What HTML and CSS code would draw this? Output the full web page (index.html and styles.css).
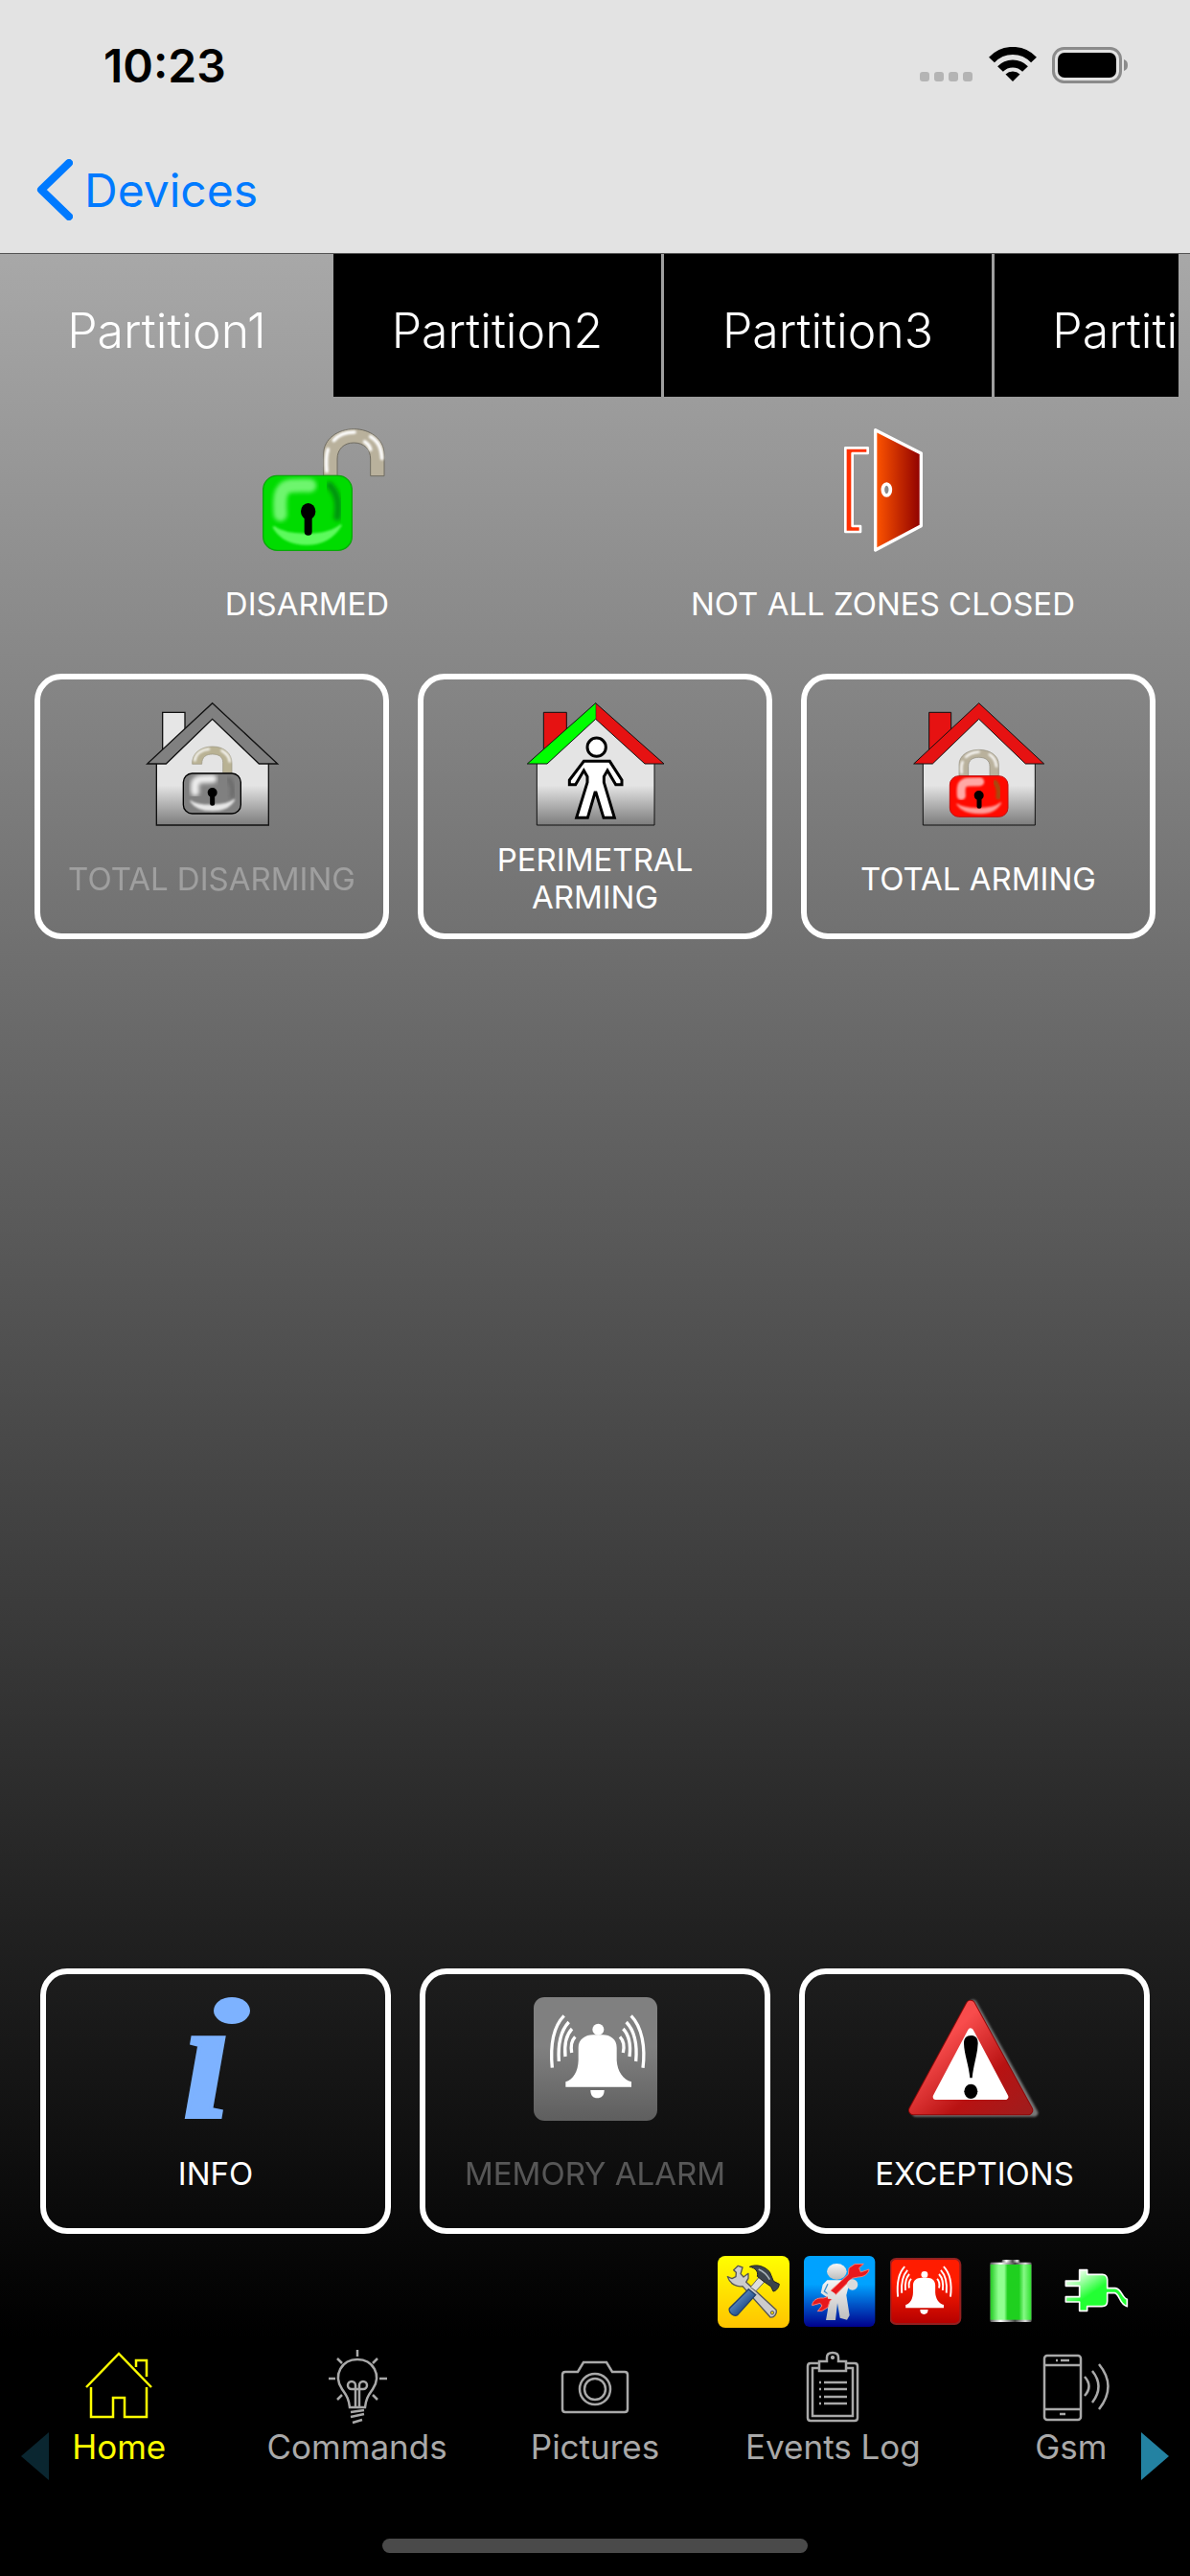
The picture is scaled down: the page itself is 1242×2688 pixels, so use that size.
FILE: index.html
```html
<!DOCTYPE html>
<html lang="en">
<head>
    <meta charset="UTF-8">
    <meta name="viewport" content="width=device-width, initial-scale=1.0">
    <title>Partition1</title>
    <link rel="stylesheet" href="styles.css">
</head>
<body>
    <!-- shared shapes -->
    <svg class="defs" width="0" height="0" aria-hidden="true">
        <defs>
            <linearGradient id="wall" x1="0" y1="0" x2="0" y2="1">
                <stop offset="0" stop-color="#e4e4e4"/>
                <stop offset="0.64" stop-color="#e4e4e4"/>
                <stop offset="1" stop-color="#7c7c7c"/>
            </linearGradient>
            <linearGradient id="door" x1="0" y1="0" x2="1" y2="0">
                <stop offset="0" stop-color="#ff5500"/>
                <stop offset="1" stop-color="#8e0000"/>
            </linearGradient>
            <linearGradient id="grayBox" x1="0" y1="0" x2="0" y2="1">
                <stop offset="0.4" stop-color="#808080"/>
                <stop offset="1" stop-color="#5e5e5e"/>
            </linearGradient>
            <linearGradient id="redBox" x1="0" y1="0" x2="0" y2="1">
                <stop offset="0.35" stop-color="#ff1c00"/>
                <stop offset="1" stop-color="#b40000"/>
            </linearGradient>
            <linearGradient id="yellowBox" x1="0" y1="0" x2="0" y2="1">
                <stop offset="0" stop-color="#ffff00"/>
                <stop offset="1" stop-color="#ffc400"/>
            </linearGradient>
            <linearGradient id="blueBox" x1="0" y1="0" x2="0" y2="1">
                <stop offset="0.4" stop-color="#00a2ff"/>
                <stop offset="1" stop-color="#00008c"/>
            </linearGradient>
            <linearGradient id="cell" x1="0" y1="0" x2="1" y2="0">
                <stop offset="0" stop-color="#22c822"/>
                <stop offset="0.2" stop-color="#90ff90"/>
                <stop offset="0.34" stop-color="#90ff90"/>
                <stop offset="0.42" stop-color="#1fd01f"/>
                <stop offset="0.7" stop-color="#1fd01f"/>
                <stop offset="0.82" stop-color="#86f986"/>
                <stop offset="1" stop-color="#2fe02f"/>
            </linearGradient>
            <linearGradient id="metal" x1="0" y1="0" x2="1" y2="0">
                <stop offset="0" stop-color="#555"/>
                <stop offset="0.25" stop-color="#fff"/>
                <stop offset="0.6" stop-color="#444"/>
                <stop offset="0.85" stop-color="#ddd"/>
                <stop offset="1" stop-color="#555"/>
            </linearGradient>
            <linearGradient id="plugFill" x1="0" y1="0" x2="1" y2="1">
                <stop offset="0.15" stop-color="#dfffdf"/>
                <stop offset="0.5" stop-color="#22ff33"/>
            </linearGradient>
            <linearGradient id="warn" x1="0" y1="0" x2="1" y2="1">
                <stop offset="0.3" stop-color="#f84c4c"/>
                <stop offset="0.68" stop-color="#b81212"/>
                <stop offset="1" stop-color="#a01c1c"/>
            </linearGradient>
            <linearGradient id="figure" x1="0" y1="0" x2="0" y2="1">
                <stop offset="0" stop-color="#f6f6f6"/>
                <stop offset="1" stop-color="#bdbdbd"/>
            </linearGradient>
            <linearGradient id="handle" x1="0" y1="0" x2="1" y2="1">
                <stop offset="0.2" stop-color="#6d9bd1"/>
                <stop offset="0.7" stop-color="#1d4a86"/>
            </linearGradient>
            <filter id="soft" x="-30%" y="-30%" width="160%" height="160%">
                <feGaussianBlur stdDeviation="6"/>
            </filter>
            <filter id="glow" x="-30%" y="-30%" width="160%" height="160%">
                <feGaussianBlur stdDeviation="3"/>
            </filter>

            <!-- bell with sound waves -->
            <g id="bell">
                <circle cx="610" cy="233" r="18" fill="#fff"/>
                <path d="M508 413V397C532 390 547 364 548 330V290C548 264 570 250 594 250H624C648 250 668 264 668 290V330C670 364 688 390 714 397V413Z" fill="#fff"/>
                <path d="M586 423H629C629 440 620 448 607 448S586 440 586 423Z" fill="#fff"/>
                <g fill="none" stroke="#fff" stroke-width="10">
                    <path d="M503 190C468 226 460 290 466 353"/>
                    <path d="M518 210C488 242 484 290 487 333"/>
                    <path d="M528 231C506 254 504 286 507 318"/>
                    <path d="M538 256C524 270 524 288 527 306"/>
                    <path d="M713 190C748 226 758 290 750 353"/>
                    <path d="M698 210C728 242 732 290 728 333"/>
                    <path d="M688 231C710 254 712 286 708 318"/>
                    <path d="M678 256C692 270 692 288 688 306"/>
                </g>
            </g>
        </defs>
    </svg>

    <header class="header">
        <div class="status-bar">
            <span class="clock">10:23</span>
            <svg class="status-icons" viewBox="0 0 218 38" aria-hidden="true">
                <g fill="#b4b4b4">
                    <rect x="0" y="26" width="10" height="10" rx="3"/>
                    <rect x="15" y="26" width="10" height="10" rx="3"/>
                    <rect x="30" y="26" width="10" height="10" rx="3"/>
                    <rect x="45" y="26" width="10" height="10" rx="3"/>
                </g>
                <g fill="none" stroke="#000" stroke-width="8">
                    <path d="M75 13.500A30 30 0 0 1 119 13.500"/>
                    <path d="M84 23A18 18 0 0 1 110 23"/>
                </g>
                <path d="M97 36L89.500 28.500A11 11 0 0 1 104.500 28.500Z"/>
                <rect x="139.500" y="1.500" width="70" height="35" rx="11" fill="none" stroke="#8b8b8b" stroke-width="3"/>
                <rect x="144" y="6" width="61" height="26" rx="7"/>
                <path d="M213 13C216 14 217 16 217 19S216 24 213 25Z" fill="#8b8b8b"/>
            </svg>
        </div>
        <a class="back" href="#">
            <svg class="back-icon" viewBox="0 0 38 64" aria-hidden="true">
                <path d="M34 4L5 32L34 60" fill="none" stroke="#007aff" stroke-width="8" stroke-linecap="round" stroke-linejoin="round"/>
            </svg>
            Devices
        </a>
    </header>

    <nav class="partitions">
        <button class="partition active">Partition1</button>
        <button class="partition">Partition2</button>
        <button class="partition">Partition3</button>
        <button class="partition">Partition4</button>
    </nav>

    <main class="content">
        <section class="state">
            <div class="state-item">
                <svg class="icon icon-lock" viewBox="63 84 480 387" aria-hidden="true">
                    <path d="M353 232V165C353 115 400 86 448 86S543 115 543 165V233H500V180C500 150 480 129 448 129S396 150 396 180V232Z" fill="#b9b19c" stroke="#6f6b60" stroke-width="3"/>
                    <g fill="none" stroke="#fff" stroke-width="11" stroke-linecap="round" filter="url(#glow)">
                        <path d="M363 218C360 185 362 165 367 150"/>
                        <path d="M385 122C400 103 420 96 450 96"/>
                        <path d="M500 110C525 125 534 145 536 178"/>
                        <path d="M482 126C492 133 498 140 500 150"/>
                    </g>
                    <rect x="164" y="232" width="278" height="234" rx="44" fill="#00dc00" stroke="#0aa80a" stroke-width="4"/>
                    <path d="M218 354C214 300 216 268 250 264C275 262 300 262 310 263" fill="none" stroke="#6ef56e" stroke-width="42" stroke-linecap="round" filter="url(#soft)"/>
                    <path d="M372 262C398 290 402 320 396 362" fill="none" stroke="#00930a" stroke-width="22" stroke-linecap="round" filter="url(#soft)"/>
                    <path d="M196 392C240 425 365 425 408 386C385 425 350 446 300 446S215 425 196 392Z" fill="#5dfa5d" stroke="#5dfa5d" stroke-width="6" filter="url(#glow)"/>
                    <ellipse cx="305" cy="344" rx="23" ry="26"/>
                    <path d="M305 350V407" stroke="#000" stroke-width="24" stroke-linecap="round"/>
                </svg>
                <p class="label">DISARMED</p>
            </div>
            <div class="state-item">
                <svg class="icon icon-door" viewBox="538 82 252 387" aria-hidden="true">
                    <path d="M545 143H615V160H567V388H592V406H545Z" fill="#ff2f00" stroke="#fff" stroke-width="8" stroke-linejoin="round"/>
                    <path d="M639 87L782 160V387L639 463Z" fill="url(#door)" stroke="#fff" stroke-width="10" stroke-linejoin="round"/>
                    <ellipse cx="674" cy="274" rx="12" ry="18" fill="#8a8a8a" stroke="#fff" stroke-width="11"/>
                </svg>
                <p class="label">NOT ALL ZONES CLOSED</p>
            </div>
        </section>

        <section class="cards">
            <button class="card" disabled>
                <svg class="icon icon-house" viewBox="385 130 435 387" aria-hidden="true">
                    <g stroke="#111" stroke-width="4">
                        <path d="M447 290V161H517V240Z" fill="#e6e6e6"/>
                        <path d="M428 514V310L603 170L779 310V514Z" fill="url(#wall)"/>
                        <path d="M603 132L807 322H749L603 182L458 322H399Z" fill="#808080"/>
                    </g>
                    <path d="M540 323C538 290 565 268 603 268S664 290 664 320V350H636V318C636 300 622 292 603 292S570 300 570 323Z" fill="#b9b294" stroke="#999480" stroke-width="2"/>
                    <g fill="none" stroke="#fff" stroke-width="7" stroke-linecap="round" filter="url(#glow)">
                        <path d="M548 312C550 290 570 278 592 276"/>
                        <path d="M632 281C648 290 656 300 657 315"/>
                    </g>
                    <rect x="512" y="352" width="180" height="126" rx="28" fill="#808080" stroke="#000" stroke-width="4"/>
                    <path d="M549 410C545 376 552 372 570 370L604 369" fill="none" stroke="#eee" stroke-width="26" stroke-linecap="round" filter="url(#soft)"/>
                    <path d="M654 370C668 390 668 405 665 425" fill="none" stroke="#666" stroke-width="12" stroke-linecap="round" filter="url(#soft)"/>
                    <path d="M534 438C560 457 645 457 672 434C655 462 632 468 603 468S548 460 534 438Z" fill="#e6e6e6" stroke="#e6e6e6" stroke-width="4" filter="url(#glow)"/>
                    <circle cx="603" cy="412" r="15"/>
                    <path d="M603 412V446" stroke="#000" stroke-width="15" stroke-linecap="round"/>
                </svg>
                <span class="label">TOTAL DISARMING</span>
            </button>
            <button class="card">
                <svg class="icon icon-house" viewBox="385 130 435 387" aria-hidden="true">
                    <g stroke="#111" stroke-width="3">
                        <path d="M440 290V161H512V240Z" fill="#e61212"/>
                        <path d="M419 514V310L603 170L787 310V514Z" fill="url(#wall)"/>
                        <path d="M603 132L817 322H757L603 182Z" fill="#e61212"/>
                        <path d="M603 182L451 322H389L603 132" fill="#00ff00"/>
                    </g>
                    <g fill="#fff" stroke="#000" stroke-width="9">
                        <circle cx="606" cy="270" r="29"/>
                        <path d="M566 314H647L685 373V387H666L640 343L629 362V380L662 491H628L604 412H601L578 491H543L577 380V362L566 343L540 387H521V373Z"/>
                    </g>
                </svg>
                <span class="label">PERIMETRAL ARMING</span>
            </button>
            <button class="card">
                <svg class="icon icon-house" viewBox="385 130 435 387" aria-hidden="true">
                    <g stroke="#111" stroke-width="3">
                        <path d="M447 290V161H516V240Z" fill="#e61212"/>
                        <path d="M428 514V310L603 170L779 310V514Z" fill="url(#wall)"/>
                        <path d="M603 132L807 322H749L603 182L458 322H399Z" fill="#e61212"/>
                    </g>
                    <path d="M541 360V325C541 295 570 278 603 278S665 295 665 325V360H637V330C637 310 622 302 603 302S570 310 570 330V360Z" fill="#b9b19c" stroke="#8d8878" stroke-width="2"/>
                    <g fill="none" stroke="#fff" stroke-width="7" stroke-linecap="round" filter="url(#glow)">
                        <path d="M549 350C547 335 548 325 552 316"/>
                        <path d="M562 301C572 290 585 286 603 285"/>
                        <path d="M636 293C650 302 656 312 658 330"/>
                    </g>
                    <rect x="512" y="360" width="182" height="128" rx="28" fill="#ff0a00" stroke="#c01010" stroke-width="3"/>
                    <path d="M548 422C545 386 552 381 570 379L606 378" fill="none" stroke="#ffa8a4" stroke-width="27" stroke-linecap="round" filter="url(#glow)"/>
                    <path d="M654 380C666 395 667 408 664 426" fill="none" stroke="#a84a0a" stroke-width="16" stroke-linecap="round" filter="url(#glow)"/>
                    <path d="M534 448C560 467 645 467 672 444C655 472 632 477 603 477S548 469 534 448Z" fill="#ff9c98" stroke="#ff9c98" stroke-width="4" filter="url(#glow)"/>
                    <circle cx="603" cy="421" r="15"/>
                    <path d="M604 421V455" stroke="#000" stroke-width="15" stroke-linecap="round"/>
                </svg>
                <span class="label">TOTAL ARMING</span>
            </button>
        </section>

        <section class="cards cards-bottom">
            <button class="card">
                <svg class="icon icon-info" viewBox="0 0 76 129" aria-hidden="true">
                    <text class="info-letter" x="4" y="125">ı</text>
                    <ellipse cx="55" cy="14" rx="19" ry="14" fill="#7db2ff"/>
                </svg>
                <span class="label">INFO</span>
            </button>
            <button class="card" disabled>
                <svg class="icon icon-bell" viewBox="408 132 387 387" aria-hidden="true">
                    <rect x="408" y="132" width="387" height="387" rx="34" fill="url(#grayBox)"/>
                    <use href="#bell"/>
                </svg>
                <span class="label">MEMORY ALARM</span>
            </button>
            <button class="card">
                <svg class="icon icon-warning" viewBox="375 130 432 387" aria-hidden="true">
                    <path d="M587 150L778 492H408Z" fill="#777" stroke="#777" stroke-width="24" stroke-linejoin="round" filter="url(#glow)"/>
                    <path d="M579 154L759 484H400Z" fill="url(#warn)" stroke="#8e0808" stroke-width="32" stroke-linejoin="round"/>
                    <path d="M579 154L759 484H400Z" fill="url(#warn)" stroke="url(#warn)" stroke-width="26" stroke-linejoin="round"/>
                    <path d="M579 236L688 442H470Z" fill="#fff" stroke="#fff" stroke-width="18" stroke-linejoin="round"/>
                    <path d="M558 274C558 258 566 250 580 250S602 258 602 274C601 310 588 340 584 383H577C573 340 559 310 558 274Z"/>
                    <ellipse cx="580" cy="425" rx="21" ry="23"/>
                </svg>
                <span class="label">EXCEPTIONS</span>
            </button>
        </section>

        <div class="indicators">
            <!-- tools -->
            <svg class="indicator" viewBox="57 42 225 225" aria-hidden="true">
                <rect x="57" y="42" width="225" height="225" rx="24" fill="url(#yellowBox)"/>
                <path d="M121 73L135 78L129 98L138 108L153 97V112L146 124L240 211C244 222 234 236 222 234L135 137C120 140 96 132 88 107L102 113L114 107L115 94L107 86Z" fill="#ccc" stroke="#555" stroke-width="4" stroke-linejoin="round"/>
                <circle cx="228" cy="220" r="5" fill="#ffe000" stroke="#555" stroke-width="3"/>
                <path d="M192 102L209 117L177 152L160 140Z" fill="#ddd" stroke="#666" stroke-width="3"/>
                <path d="M157 76C180 66 205 75 220 92L232 121L250 130C249 142 240 152 231 153L224 138L201 122L181 106C185 90 175 80 157 76Z" fill="#3b444b" stroke="#222" stroke-width="3"/>
                <path d="M185 84C200 90 212 102 220 116" fill="none" stroke="#a9b4ba" stroke-width="5"/>
                <path d="M154 146L176 164L120 226C108 234 90 220 94 206Z" fill="url(#handle)" stroke="#23406b" stroke-width="4"/>
            </svg>
            <!-- service -->
            <svg class="indicator" viewBox="327 42 225 225" aria-hidden="true">
                <rect x="327" y="42" width="223" height="222" rx="18" fill="url(#blueBox)"/>
                <g fill="url(#figure)">
                    <ellipse cx="430" cy="91" rx="31" ry="25"/>
                    <path d="M400 118H455L470 125L460 165L470 228L462 242L440 236L432 190L426 243H396L402 210L400 172L380 158L386 132Z"/>
                </g>
                <path d="M402 130L391 153L404 162" fill="none" stroke="#3a8fd0" stroke-width="4"/>
                <path d="M422 168L412 150L466 100L468 80L486 68L514 67L500 80L505 93L531 84C530 98 515 108 497 108L478 112L430 160L408 184L402 203L384 214L370 215L384 198L378 190L353 197C353 182 368 172 388 174L402 170Z" fill="#e8181c" stroke="#ff7a70" stroke-width="3" stroke-linejoin="round"/>
                <circle cx="479" cy="132" r="17" fill="#dcdcdc"/>
                <path d="M400 152C420 150 435 165 425 178L402 176Z" fill="#ddd"/>
            </svg>
            <!-- alarm -->
            <svg class="indicator" viewBox="597 42 225 225" aria-hidden="true">
                <rect x="598" y="51" width="219" height="204" rx="18" fill="url(#redBox)" stroke="#922020" stroke-width="6"/>
                <use href="#bell" transform="translate(351 -35) scale(0.58)"/>
            </svg>
            <!-- battery -->
            <svg class="indicator" viewBox="867 42 225 225" aria-hidden="true">
                <rect x="947" y="54" width="56" height="14" rx="4" fill="url(#metal)"/>
                <rect x="910" y="62" width="130" height="187" rx="4" fill="url(#metal)"/>
                <rect x="911" y="69" width="128" height="173" fill="url(#cell)"/>
            </svg>
            <!-- mains plug -->
            <svg class="indicator" viewBox="1137 42 225 225" aria-hidden="true">
                <path d="M1190 86H1214V100H1262C1272 100 1277 108 1277 116V143H1302C1322 144 1322 172 1339 178V200C1314 194 1316 160 1300 158H1277V184C1277 196 1270 200 1260 200H1214V214H1190V186H1147V170H1190V136H1147V120H1190Z" fill="url(#plugFill)" stroke="#fff" stroke-width="5" stroke-linejoin="round"/>
            </svg>
        </div>
    </main>

    <footer class="footer">
        <nav class="tabbar">
            <a class="tab active" href="#">
                <svg class="tab-icon" viewBox="0 0 80 80" aria-hidden="true">
                    <path d="M6 39L40 4L74 39M11 39V70H34V50H46V70H69V39M58 18V11H69V28"/>
                </svg>
                Home
            </a>
            <a class="tab" href="#">
                <svg class="tab-icon" viewBox="0 0 80 80" aria-hidden="true">
                    <path d="M32 60C31 50 28 47 24 41C14 26 24 10 40 10S66 26 56 41C52 47 49 50 48 60Z"/>
                    <path d="M40 0V7M10 30H17M63 30H71M19 9L24 14M61 9L56 14M24 47L19 52M56 47L61 52"/>
                    <path d="M38 60V37A4 4 0 1 0 34 41H46A4 4 0 1 0 42 37V60"/>
                    <path d="M33 65L47 63M33 70L47 67M35 76L45 73"/>
                </svg>
                Commands
            </a>
            <a class="tab" href="#">
                <svg class="tab-icon" viewBox="0 0 80 80" aria-hidden="true">
                    <path d="M9 23H22L28 13H52L58 23H71Q74 23 74 26V62Q74 65 71 65H9Q6 65 6 62V26Q6 23 9 23Z"/>
                    <circle cx="40" cy="41" r="16"/>
                    <circle cx="40" cy="41" r="11"/>
                </svg>
                Pictures
            </a>
            <a class="tab" href="#">
                <svg class="tab-icon" viewBox="0 0 80 80" aria-hidden="true">
                    <path d="M26 14H17Q14 14 14 17V71Q14 74 17 74H63Q66 74 66 71V17Q66 14 63 14H54"/>
                    <path d="M26 19H19V69H61V19H54"/>
                    <path d="M26 22V12H34V8Q34 3 40 3T46 8V12H54V22Z"/>
                    <path d="M38 8H42M40 6V10"/>
                    <path d="M26 34H28M31 34H55M26 41H28M31 41H55M26 49H28M31 49H55M26 56H28M31 56H55"/>
                </svg>
                Events Log
            </a>
            <a class="tab" href="#">
                <svg class="tab-icon" viewBox="0 0 80 80" aria-hidden="true">
                    <rect x="12" y="6" width="38" height="67" rx="3"/>
                    <path d="M12 16H50M12 62H50M24 11H26M29 11H38M28 67H34"/>
                    <path d="M54 28Q63 38 54 48M62 22Q75 38 62 55M69 15Q88 38 69 62"/>
                </svg>
                Gsm
            </a>
        </nav>
        <span class="arrow arrow-left"></span>
        <span class="arrow arrow-right"></span>
        <div class="home-indicator"></div>
    </footer>
</body>
</html>
```
FILE: styles.css
```css
* {
    box-sizing: border-box;
}
body {
    margin: 0;
    min-height: 100vh;
    display: flex;
    flex-direction: column;
    font-family: Inter, "Liberation Sans", sans-serif;
    color: white;
    background: linear-gradient(#a8a8a8 264px, #000 calc(100% - 249px));
}
button {
    margin: 0;
    padding: 0;
    border: none;
    background: none;
    font: inherit;
    color: inherit;
    cursor: pointer;
}
a {
    color: inherit;
    text-decoration: none;
}
.defs {
    position: absolute;
}

/* header */
.header {
    height: 265px;
    background-color: #e3e3e3;
    border-bottom: 1px solid #555;
}
.status-bar {
    height: 136px;
    padding: 0 64px 0 108px;
    display: flex;
    align-items: center;
    justify-content: space-between;
    color: black;
}
.clock {
    font-size: 48px;
    font-weight: 600;
}
.status-icons {
    width: 218px;
    height: 38px;
}
.back {
    height: 124px;
    padding-left: 38px;
    display: flex;
    align-items: center;
    gap: 12px;
    font-size: 48px;
    color: #007aff;
}
.back-icon {
    width: 38px;
    height: 64px;
}

/* partitions */
.partitions {
    height: 149px;
    margin-right: 12px;
    display: flex;
    overflow-x: auto;
    scrollbar-width: none;
}
.partition {
    flex: 0 0 345px;
    padding-top: 10px;
    border-right: 3px solid #9f9f9f;
    background-color: black;
    font-size: 50px;
    font-weight: 300;
}
.partition.active {
    flex-basis: 348px;
    border-right: none;
    background: none;
}

/* content */
.content {
    flex: 1;
    display: flex;
    flex-direction: column;
}
.icon {
    height: 129px;
    overflow: visible;
}
.icon-lock { width: 160px; }
.icon-door { width: 84px; }
.icon-house { width: 145px; }
.icon-info { width: 76px; }
.icon-bell { width: 129px; }
.icon-warning { width: 144px; }
.info-letter {
    font-family: "Liberation Serif", serif;
    font-size: 180px;
    font-style: italic;
    font-weight: bold;
    fill: #7db2ff;
    stroke: #7db2ff;
    stroke-width: 4;
}
.label {
    margin: 0;
    font-size: 33px;
    line-height: 39px;
}
.state {
    padding: 33px 20px 0;
    display: flex;
}
.state-item {
    flex: 1;
    display: flex;
    flex-direction: column;
    align-items: center;
    gap: 35px;
}
.cards {
    padding: 53px 36px 0;
    display: flex;
    gap: 30px;
}
.cards-bottom {
    margin-top: auto;
    padding: 0 42px;
}
.card {
    flex: 1;
    height: 277px;
    padding: 24px 36px 0;
    display: flex;
    flex-direction: column;
    align-items: center;
    gap: 16px;
    border: 6px solid white;
    border-radius: 28px;
}
.card .label {
    height: 78px;
    display: flex;
    align-items: center;
    text-align: center;
}
.card:disabled .label {
    margin: 0 -20px;
    opacity: 0.3;
}
.indicators {
    padding: 23px 58px 10px;
    display: flex;
    justify-content: flex-end;
    gap: 15px;
}
.indicator {
    width: 75px;
    height: 75px;
}

/* bottom bar */
.footer {
    position: relative;
    height: 249px;
    padding-bottom: 24px;
    display: flex;
    flex-direction: column;
    justify-content: space-between;
    align-items: center;
    background-color: black;
}
.tabbar {
    width: 100%;
    padding-top: 13px;
    display: flex;
}
.tab {
    flex: 1;
    display: flex;
    flex-direction: column;
    align-items: center;
    font-size: 35px;
    line-height: 42px;
    color: #a9a9a9;
}
.tab.active {
    color: #ffff00;
}
.tab-icon {
    width: 80px;
    height: 80px;
    fill: none;
    stroke: currentColor;
    stroke-width: 2.5;
    overflow: visible;
}
.arrow {
    position: absolute;
    top: 99px;
    border: 25px solid transparent;
}
.arrow-left {
    left: 22px;
    border-left: none;
    border-right: 29px solid #0a2630;
}
.arrow-right {
    right: 22px;
    border-right: none;
    border-left: 29px solid #2382a2;
}
.home-indicator {
    width: 444px;
    height: 15px;
    border-radius: 8px;
    background-color: #4a4a4a;
}
```
